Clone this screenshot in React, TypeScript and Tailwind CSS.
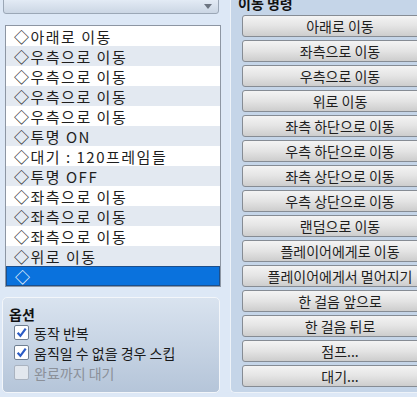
import React from 'react';

const listItems = [
    '아래로 이동',
    '우측으로 이동',
    '우측으로 이동',
    '우측으로 이동',
    '우측으로 이동',
    '투명 ON',
    '대기 : 120프레임들',
    '투명 OFF',
    '좌측으로 이동',
    '좌측으로 이동',
    '좌측으로 이동',
    '위로 이동',
    '',
];

const commands = [
    '아래로 이동',
    '좌측으로 이동',
    '우측으로 이동',
    '위로 이동',
    '좌측 하단으로 이동',
    '우측 하단으로 이동',
    '좌측 상단으로 이동',
    '우측 상단으로 이동',
    '랜덤으로 이동',
    '플레이어에게로 이동',
    '플레이어에게서 멀어지기',
    '한 걸음 앞으로',
    '한 걸음 뒤로',
    '점프...',
    '대기...',
];

const options = [
    {label: '동작 반복', checked: true, disabled: false},
    {label: '움직일 수 없을 경우 스킵', checked: true, disabled: false},
    {label: '완료까지 대기', checked: false, disabled: true},
];

function CheckBox({checked, disabled}: {checked: boolean; disabled: boolean}) {
    return (
        <div
            className={`w-[15px] h-[15px] shrink-0 rounded-[2px] border flex items-center justify-center ${
                disabled ? 'bg-[#e2e7ee] border-[#aab3c0]' : 'bg-white border-[#6f7f92]'
            }`}
        >
            {checked && (
                <svg width="11" height="11" viewBox="0 0 10 10">
                    <path d="M1.5 5.2 L4 8 L8.8 1.5" fill="none" stroke="#2c5cc5" strokeWidth="2"/>
                </svg>
            )}
        </div>
    );
}

export default function App() {
    return (
        <div
            className="w-[417px] h-[397px] overflow-hidden flex bg-[#dde8f6] text-[#1e1e1e]"
            style={{fontFamily: '"Noto Sans CJK KR", "Noto Sans", sans-serif'}}
        >
            {/* Left column */}
            <div className="w-[230px] flex flex-col">
                {/* Dropdown (cut off at top) */}
                <div className="ml-[3px] w-[216px] h-[15px] -mt-[1px] rounded-b-[3px] border border-[#9ba7b6] bg-gradient-to-b from-[#e3ebf5] to-[#cbd6e4] flex items-center justify-end pr-[6px]">
                    <svg width="8" height="5" viewBox="0 0 8 5">
                        <path d="M0 0 L8 0 L4 5 Z" fill="#6c7480"/>
                    </svg>
                </div>

                {/* Event list */}
                <div className="mt-[11px] ml-[5px] w-[216px] border border-[#8d96a3] bg-white">
                    {listItems.map((item, i) => {
                        const selected = i === listItems.length - 1;
                        return (
                            <div
                                key={i}
                                className={`h-[20px] pl-[8px] flex items-center text-[15px] tracking-[1.5px] leading-none whitespace-nowrap ${
                                    selected
                                        ? 'bg-[#0a72dd] text-white border border-[#1c4f8c]'
                                        : i % 2 === 0
                                            ? 'bg-white'
                                            : 'bg-[#e3e9f1]'
                                }`}
                            >
                                ◇{item}
                            </div>
                        );
                    })}
                </div>

                {/* Options group */}
                <div className="mt-[10px] ml-[2px] w-[218px] h-[96px] rounded-[5px] border border-[#f3f6fa] bg-gradient-to-b from-[#d9e3ef] to-[#b5c5d9] pl-[6px] pt-[8px]">
                    <div className="text-[14px] font-bold leading-[16px] text-[#111]">옵션</div>
                    <div className="flex flex-col gap-[5px] mt-[3px] pl-[5px]">
                        {options.map((o) => (
                            <div key={o.label} className="flex items-center gap-[5px] h-[15px]">
                                <CheckBox checked={o.checked} disabled={o.disabled}/>
                                <span className={`text-[14px] leading-none ${o.disabled ? 'text-[#8b9099]' : 'text-[#1a1a1a]'}`}>
                                    {o.label}
                                </span>
                            </div>
                        ))}
                    </div>
                </div>
            </div>

            {/* Right panel */}
            <div className="flex-1 h-[393px] rounded-bl-[5px] border-l border-b border-[#eef3f9] bg-[#c5d5e8] flex flex-col pl-[11px] overflow-hidden">
                <div className="text-[14px] font-bold leading-[16px] -mt-[5px] ml-[-4px] text-[#111]">이동 명령</div>
                <div className="flex flex-col gap-[3px] mt-[4px]">
                    {commands.map((c) => (
                        <div
                            key={c}
                            className="w-[196px] h-[22px] shrink-0 rounded-[3px] border border-[#868c94] bg-gradient-to-b from-[#f4f4f4] via-[#e4e4e4] to-[#cdcdcd] flex items-center justify-center text-[14px] leading-none text-[#1e1e1e] whitespace-nowrap"
                        >
                            {c}
                        </div>
                    ))}
                </div>
            </div>
        </div>
    );
}
